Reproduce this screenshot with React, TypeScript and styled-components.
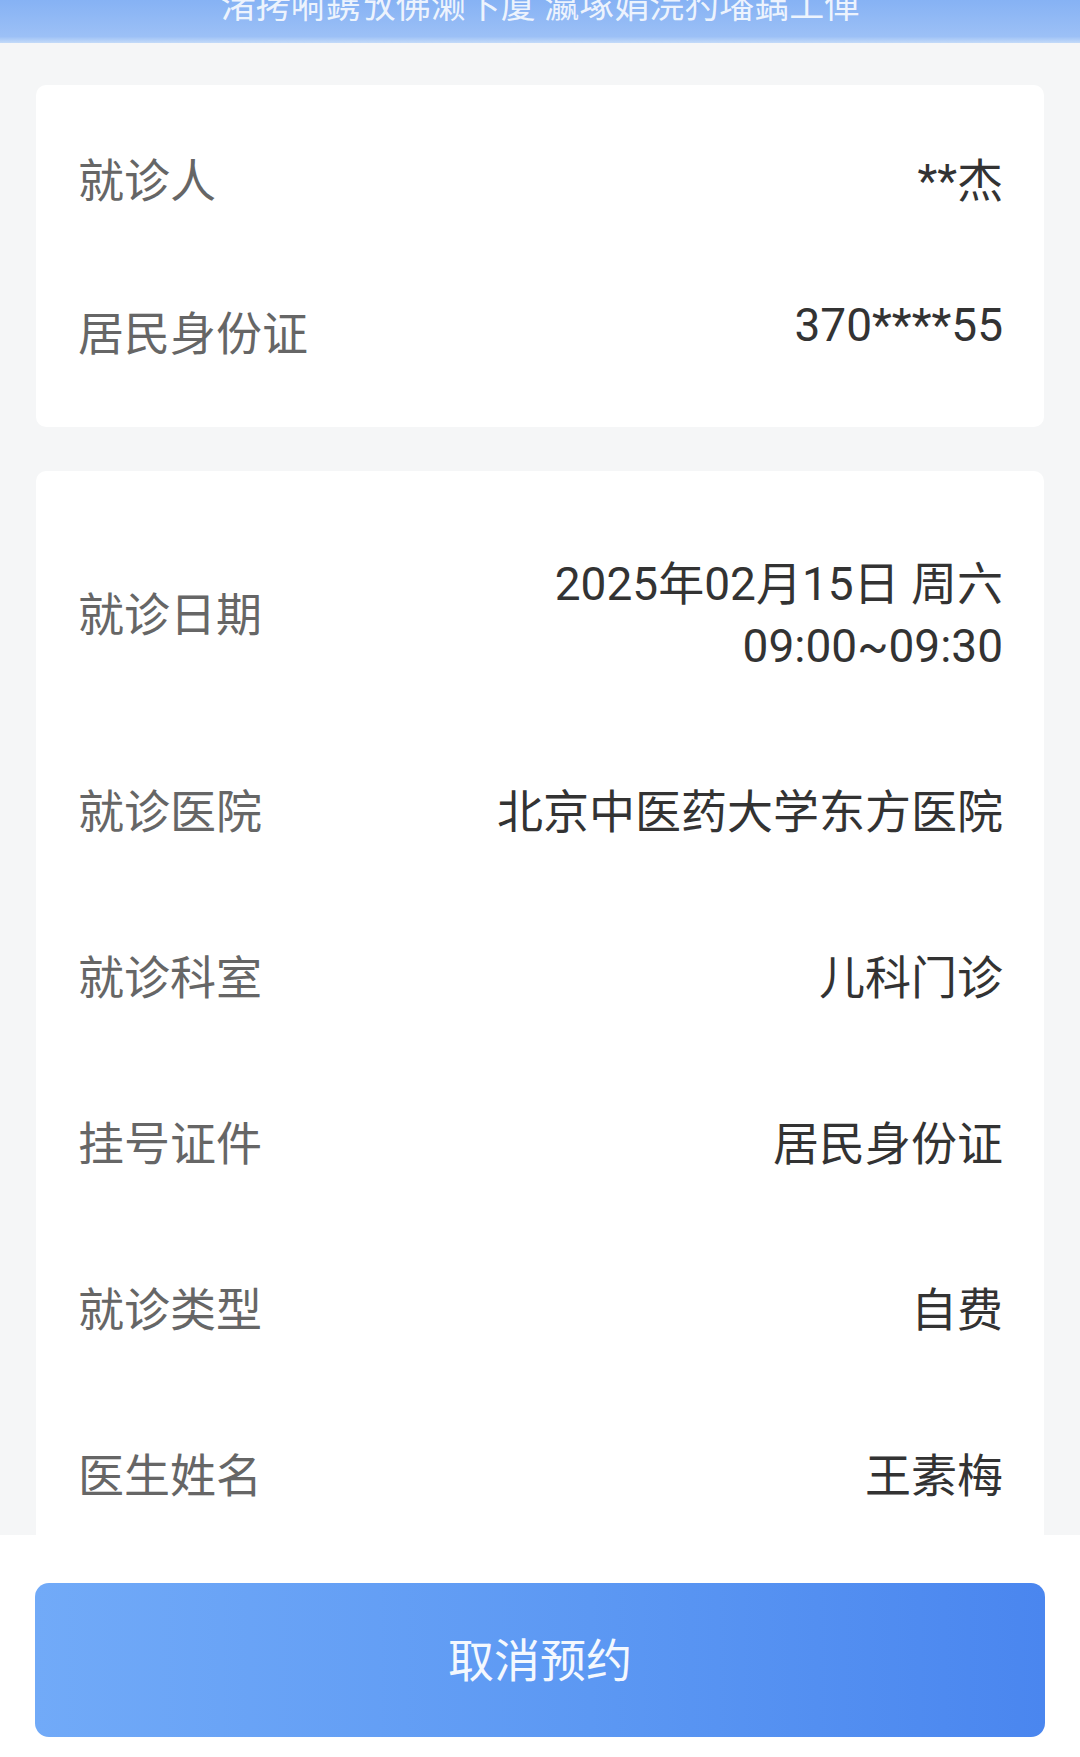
import styled, { createGlobalStyle } from 'styled-components'

const GlobalStyle = createGlobalStyle`
  html, body {
    margin: 0;
    padding: 0;
    background: #f5f6f7;
  }
  * {
    box-sizing: border-box;
  }
`

type Item = { label: string; value: string[]; raised?: boolean }

const patient: Item[] = [
  { label: '就诊人', value: ['**杰'] },
  { label: '居民身份证', value: ['370****55'], raised: true },
]

const visit: Item[] = [
  { label: '就诊日期', value: ['2025年02月15日 周六', '09:00~09:30'] },
  { label: '就诊医院', value: ['北京中医药大学东方医院'] },
  { label: '就诊科室', value: ['儿科门诊'] },
  { label: '挂号证件', value: ['居民身份证'] },
  { label: '就诊类型', value: ['自费'] },
  { label: '医生姓名', value: ['王素梅'] },
]

const App = () => {
  return (
    <Screen>
      <GlobalStyle />
      <TopBar>
        <TopTitle>渚拷嗬鎸攷佛濑卞厦 瀛塚娟浣犳墦鍝工俥</TopTitle>
      </TopBar>
      <Content>
        <Card $padTop={19} $padBottom={16}>
          {patient.map((item) => (
            <Row key={item.label} $pad={46}>
              <Label>{item.label}</Label>
              <Value $raised={item.raised}>
                {item.value.map((line) => (
                  <div key={line}>{line}</div>
                ))}
              </Value>
            </Row>
          ))}
        </Card>
        <Card $padTop={30} $padBottom={20}>
          {visit.map((item) => (
            <Row key={item.label} $pad={52}>
              <Label>{item.label}</Label>
              <Value>
                {item.value.map((line) => (
                  <div key={line}>{line}</div>
                ))}
              </Value>
            </Row>
          ))}
        </Card>
      </Content>
      <Footer>
        <CancelButton>取消预约</CancelButton>
      </Footer>
    </Screen>
  )
}

export default App

const Screen = styled.div`
  display: flex;
  flex-direction: column;
  height: 100vh;
  overflow: hidden;
  background: #f5f6f7;
  font-family: Roboto, 'Noto Sans CJK SC', sans-serif;
`

const TopBar = styled.div`
  flex: 0 0 43px;
  display: flex;
  justify-content: center;
  align-items: flex-start;
  overflow: hidden;
  background: linear-gradient(180deg, #86b2f4 0%, #9cc0f6 85%, #c4dbf9 100%);
`

const TopTitle = styled.div`
  margin-top: -11px;
  font-size: 35px;
  line-height: 36px;
  color: rgba(255, 255, 255, 0.85);
  white-space: nowrap;
`

const Content = styled.div`
  flex: 1;
  min-height: 0;
  overflow: hidden;
  display: flex;
  flex-direction: column;
  gap: 44px;
  padding: 42px 36px 0;
`

const Card = styled.div<{ $padTop: number; $padBottom: number }>`
  flex-shrink: 0;
  background: #fff;
  border-radius: 10px;
  padding: ${({ $padTop, $padBottom }) => `${$padTop}px 41px ${$padBottom}px 42px`};
`

const Row = styled.div<{ $pad: number }>`
  display: flex;
  align-items: center;
  justify-content: space-between;
  padding: ${({ $pad }) => $pad}px 0;
  font-size: 46px;
  line-height: 61px;
`

const Label = styled.div`
  color: #666;
  white-space: nowrap;
`

const Value = styled.div<{ $raised?: boolean }>`
  color: #333;
  text-align: right;
  white-space: nowrap;
  line-height: 62px;
  margin-top: ${({ $raised }) => ($raised ? '-20px' : '0')};
`

const Footer = styled.div`
  flex: 0 0 222px;
  background: #fff;
  padding: 48px 35px 20px;
`

const CancelButton = styled.button`
  display: flex;
  align-items: center;
  justify-content: center;
  width: 100%;
  height: 154px;
  padding: 0 0 6px;
  border: none;
  border-radius: 14px;
  background: linear-gradient(90deg, #71aaf8 0%, #5c98f3 55%, #4a86ef 100%);
  color: #f4f8fe;
  font-family: 'Noto Sans CJK SC', sans-serif;
  font-size: 46px;
  line-height: 1;
  cursor: pointer;
`
